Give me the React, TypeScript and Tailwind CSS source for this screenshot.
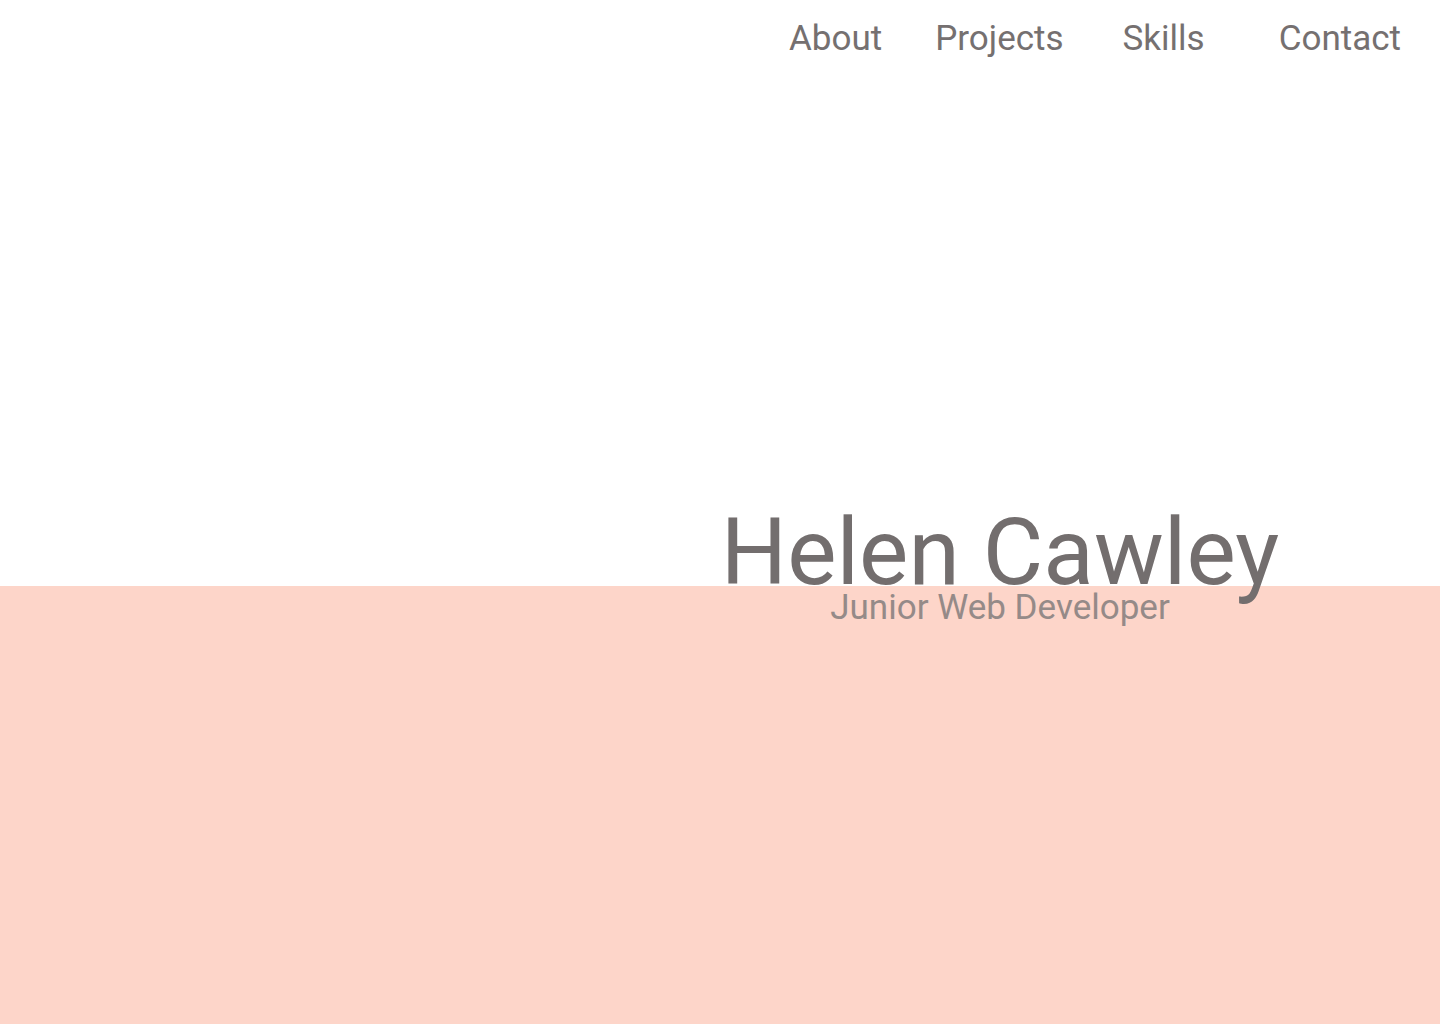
const links = [
  { label: "About", cls: "" },
  { label: "Projects", cls: "ml-[53px]" },
  { label: "Skills", cls: "ml-[59px]" },
  { label: "Contact", cls: "ml-[74px]" },
];

const App = () => {
  return (
    <div
      className="flex min-h-screen flex-col bg-white"
      style={{ fontFamily: "Roboto, 'Liberation Sans', sans-serif" }}
    >
      <section className="flex h-[586px] flex-col">
        <nav className="flex justify-end pr-[39px] pt-[21px]">
          {links.map((l) => (
            <a
              key={l.label}
              href="#"
              className={`text-[35px] leading-none text-[#757070] ${l.cls}`}
            >
              {l.label}
            </a>
          ))}
        </nav>
        <div className="flex-1" />
        <div className="relative z-10 mb-[-39px] flex justify-center pl-[560px]">
          <div className="flex flex-col items-center">
            <h1 className="text-[93px] leading-none text-[#736e6e]">Helen Cawley</h1>
            <p className="mt-[-9px] text-[35px] leading-none text-[#958a88]">Junior Web Developer</p>
          </div>
        </div>
      </section>
      <section className="flex-1 bg-[#fdd5c9]" />
    </div>
  );
};

export default App;
